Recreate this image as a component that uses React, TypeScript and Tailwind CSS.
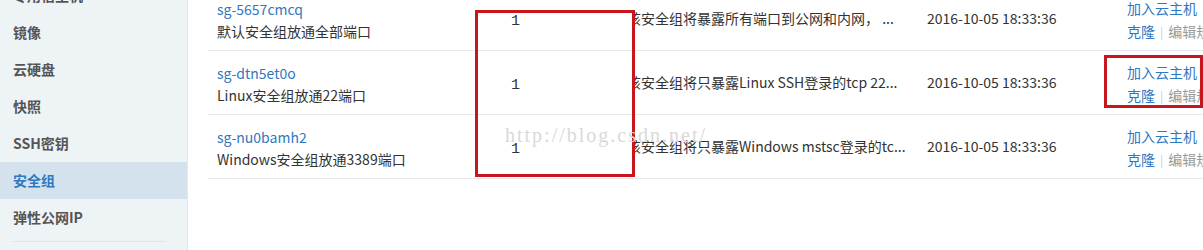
import React from 'react';

const menu = ['专用宿主机', '镜像', '云硬盘', '快照', 'SSH密钥', '安全组', '弹性公网IP'];

const groups = [
  {
    id: 'sg-5657cmcq',
    name: '默认安全组放通全部端口',
    desc: '该安全组将暴露所有端口到公网和内网， ...',
  },
  {
    id: 'sg-dtn5et0o',
    name: 'Linux安全组放通22端口',
    desc: '该安全组将只暴露Linux SSH登录的tcp 22...',
  },
  {
    id: 'sg-nu0bamh2',
    name: 'Windows安全组放通3389端口',
    desc: '该安全组将只暴露Windows mstsc登录的tc...',
  },
];

const cjk = { fontFamily: '"Noto Sans CJK SC", "Liberation Sans", sans-serif' };

export default function App() {
  return (
    <div className="relative flex w-[1203px] h-[250px] overflow-hidden bg-white" style={cjk}>
      {/* Sidebar */}
      <div className="w-[188px] shrink-0 bg-[#eef3f6] border-r border-[#e2e8ec]">
        <div className="flex flex-col mt-[-23px]">
          {menu.map((item) => (
            <div
              key={item}
              className={`h-[37px] flex items-center pl-[13px] text-[14px] font-bold ${
                item === '安全组' ? 'bg-[#d4e2ee] text-[#2f78c0]' : 'text-[#555]'
              }`}
            >
              {item}
            </div>
          ))}
          <div className="mt-[5px] ml-[13px] w-[152px] border-t border-[#dde3e7]" />
        </div>
      </div>

      {/* Table */}
      <div className="flex-1 pl-[20px]">
        <div className="mt-[-13px]">
          {groups.map((g) => (
            <div
              key={g.id}
              className="grid grid-cols-[267px_158px_282px_200px_1fr] h-[64px] border-b border-[#e6e9eb] text-[14px] whitespace-nowrap"
            >
              <div className="flex flex-col justify-center pl-[9px] leading-[22px] pt-[2px]">
                <span className="text-[#2f78c0]">{g.id}</span>
                <span className="text-[#333]">{g.name}</span>
              </div>
              <div className="flex items-center pl-[36px] pt-[8px] text-[#333] text-[15px] font-['Liberation_Mono',monospace]">1</div>
              <div className="flex items-center overflow-hidden">
                <span className="ml-[-6px] text-[#333]">{g.desc}</span>
              </div>
              <div className="flex items-center pl-[12px] text-[#333]">2016-10-05 18:33:36</div>
              <div className="flex flex-col justify-center pl-[12px] leading-[23px] pt-[2px]">
                <div>
                  <span className="text-[#2f78c0]">加入云主机</span>
                  <span className="text-[#ccc] mx-[5px] text-[12px]">|</span>
                  <span className="text-[#999]">更多</span>
                </div>
                <div>
                  <span className="text-[#2f78c0]">克隆</span>
                  <span className="text-[#ccc] mx-[5px] text-[12px]">|</span>
                  <span className="text-[#999]">编辑规则</span>
                </div>
              </div>
            </div>
          ))}
        </div>
      </div>

      {/* Annotations */}
      <div className="absolute left-[475px] top-[10px] w-[160px] h-[167px] border-[3px] border-[#c8161d]" />
      <div className="absolute left-[1104px] top-[55px] w-[99px] h-[53px] border-[3px] border-[#c8161d]" />
      <div className="absolute left-[505px] top-[120px] text-[20px] tracking-[2px] text-[#d9d9d9] font-['Liberation_Serif',serif] pointer-events-none">
        http://blog.csdn.net/
      </div>
    </div>
  );
}
